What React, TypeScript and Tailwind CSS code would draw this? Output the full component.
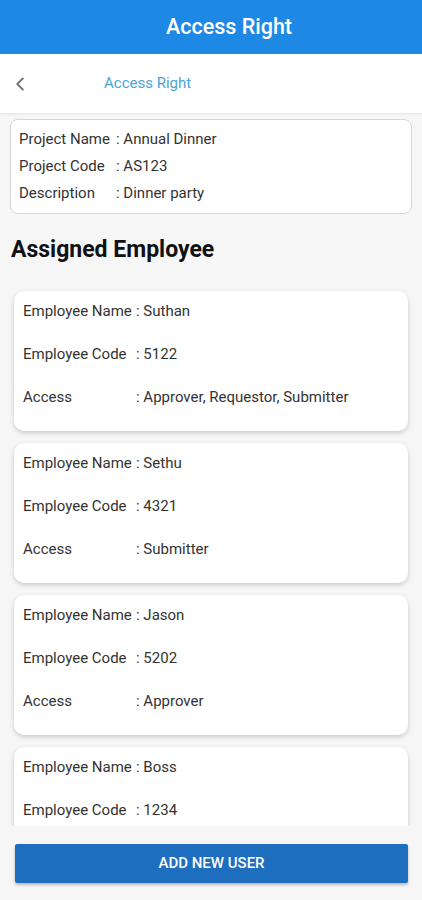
import { ChevronLeft } from "lucide-react";

const employees = [
  { name: "Suthan", code: "5122", access: "Approver, Requestor, Submitter" },
  { name: "Sethu", code: "4321", access: "Submitter" },
  { name: "Jason", code: "5202", access: "Approver" },
  { name: "Boss", code: "1234", access: "Approver" },
];

const App = () => {
  return (
    <div className="w-[422px] h-[900px] flex flex-col bg-[#f6f6f6] font-['Roboto',sans-serif] text-[#222] overflow-hidden">
      {/* App bar */}
      <header className="h-[54px] shrink-0 bg-[#1e88e5] flex items-center justify-center pl-[36px]">
        <h1 className="text-white text-[21.5px] font-medium">Access Right</h1>
      </header>

      {/* Sub bar */}
      <div className="h-[59px] shrink-0 bg-white flex items-center shadow-[0_1px_2px_rgba(0,0,0,0.08)]">
        <ChevronLeft className="w-[22px] h-[22px] ml-[9px] text-[#777]" strokeWidth={2.2} />
        <span className="ml-[73px] text-[15px] text-[#4ba3d6]">Access Right</span>
      </div>

      {/* Project info */}
      <div className="mx-[10px] mt-[6px] bg-white border border-[#d6d6d6] rounded-[8px] py-[6px] px-[8px] text-[15px] leading-[27px] text-[#333]">
        <div className="flex">
          <span className="w-[97px]">Project Name</span>
          <span>: Annual Dinner</span>
        </div>
        <div className="flex">
          <span className="w-[97px]">Project Code</span>
          <span>: AS123</span>
        </div>
        <div className="flex">
          <span className="w-[97px]">Description</span>
          <span>: Dinner party</span>
        </div>
      </div>

      <h2 className="mt-[22px] ml-[11px] text-[23px] leading-[28px] font-bold text-[#111]">
        Assigned Employee
      </h2>

      {/* Employee list */}
      <div className="mt-[16px] h-[546px] shrink-0 overflow-hidden px-[14px] pt-[11px] flex flex-col gap-[12px]">
        {employees.map((e, i) => (
          <div
            key={i}
            className="shrink-0 h-[140px] bg-white rounded-[10px] shadow-[0_2px_5px_rgba(0,0,0,0.18)] px-[9px] flex flex-col gap-[3px] text-[15px] text-[#333]"
          >
            <div className="h-[40px] flex items-center">
              <span className="w-[113px]">Employee Name</span>
              <span>: {e.name}</span>
            </div>
            <div className="h-[40px] flex items-center">
              <span className="w-[113px]">Employee Code</span>
              <span>: {e.code}</span>
            </div>
            <div className="h-[40px] flex items-center">
              <span className="w-[113px]">Access</span>
              <span>: {e.access}</span>
            </div>
          </div>
        ))}
      </div>

      {/* Bottom button */}
      <div className="pt-[18px] pl-[15px] pr-[14px]">
        <div className="w-full h-[39px] bg-[#1e6ec0] rounded-[2px] shadow-[0_2px_3px_rgba(0,0,0,0.25)] flex items-center justify-center text-white text-[15px] font-medium">
          ADD NEW USER
        </div>
      </div>
    </div>
  );
};

export default App;
